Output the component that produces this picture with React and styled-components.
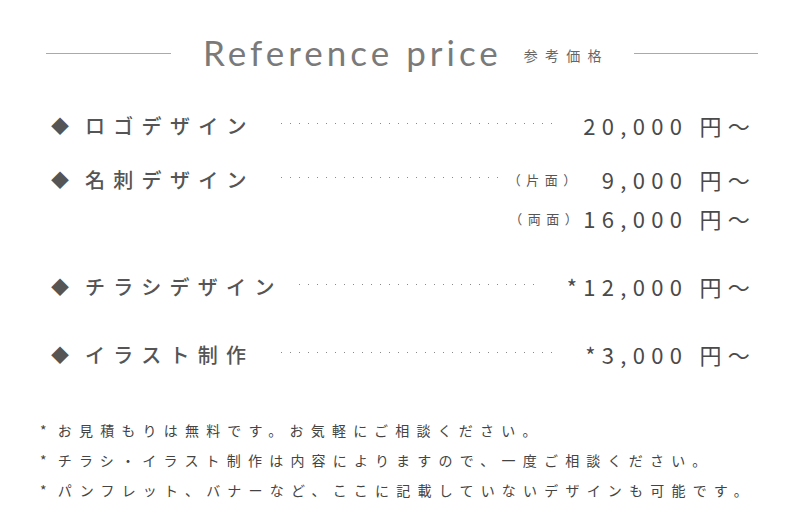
import React from 'react';
import styled, { createGlobalStyle } from 'styled-components';

const Global = createGlobalStyle`
  html, body {
    margin: 0;
    padding: 0;
    background: #ffffff;
  }
  body {
    font-family: "Noto Sans CJK JP", "Noto Sans", sans-serif;
    color: #555555;
  }
`;

const Page = styled.div`
  width: 800px;
  height: 527px;
  box-sizing: border-box;
  padding: 28px 0 0 0;
  overflow: hidden;
`;

const Header = styled.div`
  display: flex;
  align-items: center;
  padding: 0 0 0 46px;
  height: 50px;
`;

const Line = styled.div`
  flex-shrink: 0;
  height: 1px;
  width: ${p => p.$w || 125}px;
  background: #aaaaaa;
`;

const Title = styled.h1`
  margin: -2px 0 0 32px;
  font-family: "Lato", "Liberation Sans", sans-serif;
  font-weight: 400;
  font-size: 35px;
  letter-spacing: 4px;
  color: #7a7a7a;
  white-space: nowrap;
`;

const Sub = styled.span`
  margin: 4px 25px 0 22px;
  font-size: 14px;
  letter-spacing: 7.2px;
  color: #666666;
  white-space: nowrap;
`;

const List = styled.div`
  display: flex;
  flex-direction: column;
  padding: 27px 50px 0 51px;
`;

const Row = styled.div`
  display: flex;
  align-items: center;
  height: 40px;
  margin-top: ${p => p.$gap || 0}px;
`;

const Diamond = styled.span`
  width: 18px;
  font-size: 18px;
  line-height: 1;
  color: #555555;
  visibility: ${p => (p.$hidden ? 'hidden' : 'visible')};
`;

const Label = styled.span`
  margin-left: 16px;
  min-width: ${p => p.$min || 180}px;
  font-size: 20px;
  font-weight: 500;
  letter-spacing: 8.3px;
  color: #555555;
  white-space: nowrap;
`;

const Dots = styled.span`
  flex: 1;
  height: 1px;
  margin: -4px ${p => p.$right || 28}px 0 ${p => p.$left || 16}px;
  background-image: linear-gradient(to right, #8a8a8a 1px, transparent 1px);
  background-size: 9px 1px;
  background-repeat: repeat-x;
  visibility: ${p => (p.$hidden ? 'hidden' : 'visible')};
`;

const Note = styled.span`
  font-size: 13px;
  letter-spacing: 5.5px;
  color: #555555;
  white-space: nowrap;
  margin-right: ${p => p.$gap || 0}px;
`;

const Price = styled.span`
  font-size: 22px;
  font-weight: 400;
  letter-spacing: 6.3px;
  margin-right: -6px;
  color: #4a4a4a;
  white-space: nowrap;
`;

const Notes = styled.div`
  display: flex;
  flex-direction: column;
  gap: 8px;
  padding: 0 0 0 40px;
  margin-top: 45px;
`;

const NoteLine = styled.div`
  font-size: 14px;
  line-height: 22px;
  letter-spacing: 7.2px;
  color: #444444;
  white-space: nowrap;
`;

const Mark = styled.span`
  margin-right: 4px;
`;

const items = [
  { label: 'ロゴデザイン', price: '20,000 円〜' },
  { label: '名刺デザイン', note: '（片面）', noteGap: 20, price: '9,000 円〜', right: 10, gap: 14 },
  { label: '', note: '（両面）', noteGap: 0, price: '16,000 円〜', hide: true, gap: -1 },
  { label: 'チラシデザイン', price: '*12,000 円〜', min: 190, gap: 28 },
  { label: 'イラスト制作', price: '*3,000 円〜', gap: 28 },
];

const notes = [
  'お見積もりは無料です。お気軽にご相談ください。',
  'チラシ・イラスト制作は内容によりますので、一度ご相談ください。',
  'パンフレット、バナーなど、ここに記載していないデザインも可能です。',
];

export default function App() {
  return (
    <Page>
      <Global />
      <Header>
        <Line />
        <Title>Reference price</Title>
        <Sub>参考価格</Sub>
        <Line $w={124} />
      </Header>
      <List>
        {items.map((it, i) => (
          <Row key={i} $gap={it.gap}>
            <Diamond $hidden={it.hide}>◆</Diamond>
            <Label $min={it.min}>{it.label}</Label>
            <Dots $hidden={it.hide} $right={it.right} />
            {it.note && <Note $gap={it.noteGap}>{it.note}</Note>}
            <Price>{it.price}</Price>
          </Row>
        ))}
      </List>
      <Notes>
        {notes.map((n, i) => (
          <NoteLine key={i}>
            <Mark>*</Mark>
            {n}
          </NoteLine>
        ))}
      </Notes>
    </Page>
  );
}
